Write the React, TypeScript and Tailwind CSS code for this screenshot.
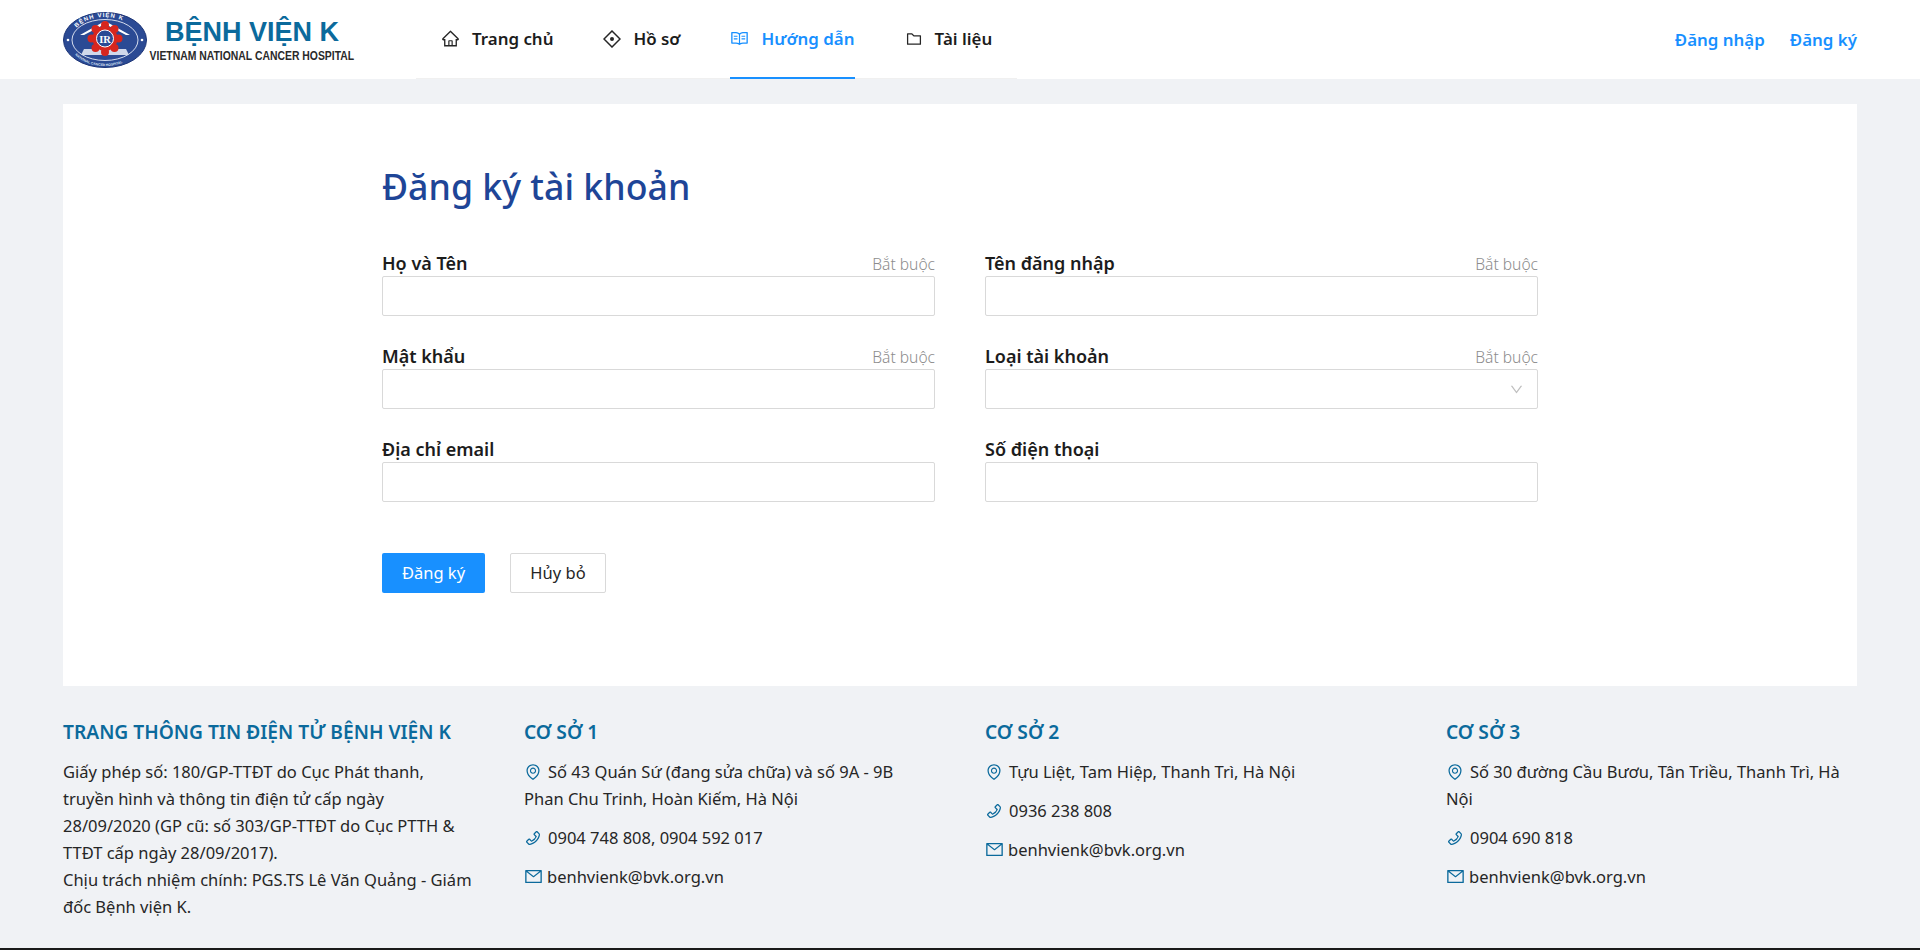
import React from "react";
import { AiOutlineHome, AiOutlineRead, AiOutlineFolder, AiOutlineEnvironment, AiOutlinePhone, AiOutlineMail, AiOutlineDown } from "react-icons/ai";

function Logo() {
  return (
    <div className="flex items-center shrink-0 w-[300px] h-[79px]">
      <svg width="84" height="58" viewBox="0 0 84 58" className="shrink-0">
        <defs>
          <path id="arcTop" d="M8 30 A34 24 0 0 1 76 30" />
          <path id="arcBot" d="M6 30 A36 25 0 0 0 78 30" />
        </defs>
        <ellipse cx="42" cy="29" rx="41.5" ry="27.5" fill="#2b4a94" stroke="#1d3577" />
        <ellipse cx="42" cy="29" rx="33" ry="20.5" fill="#2b4a94" stroke="#e8ecf6" strokeWidth="0.9" />
        <text fontSize="6" fontWeight="700" fill="#fff" fontFamily="Liberation Sans, sans-serif" letterSpacing="1"><textPath href="#arcTop" startOffset="16%">BỆNH VIỆN K</textPath></text>
        <text fontSize="3.4" fontWeight="700" fill="#dfe5f3" fontFamily="Liberation Sans, sans-serif"><textPath href="#arcBot" startOffset="16%">NATIONAL CANCER HOSPITAL</textPath></text>
        <path d="M17 24 L42 10 L67 24 L63 24 L42 13 L21 24Z" fill="#fff" />
        <path d="M21 38 H63 L66 44 H18Z" fill="#cfd7ea" />
        <g fill="#d7261e">
          <circle cx="42" cy="14" r="4" /><circle cx="42" cy="41" r="4" />
          <circle cx="28.5" cy="27.5" r="4" /><circle cx="55.5" cy="27.5" r="4" />
          <circle cx="32.5" cy="18" r="4" /><circle cx="51.5" cy="18" r="4" />
          <circle cx="32.5" cy="37" r="4" /><circle cx="51.5" cy="37" r="4" />
          <circle cx="42" cy="27.5" r="12.5" />
        </g>
        <circle cx="42" cy="27.5" r="8.5" fill="#2b4a94" stroke="#fff" />
        <text x="42" y="31.5" textAnchor="middle" fontSize="10.5" fontWeight="700" fill="#fff" fontFamily="Liberation Serif, serif">IR</text>
        <circle cx="5" cy="29" r="1.3" fill="#fff" /><circle cx="79" cy="29" r="1.3" fill="#fff" />
      </svg>
      <div className="flex flex-col items-center w-[210px] [font-family:'Liberation_Sans',sans-serif]">
        <span className="text-[27px] leading-[30px] font-bold text-[#0b6a9c] mt-[1px] whitespace-nowrap">BỆNH VIỆN K</span>
        <span className="text-[13px] leading-[15px] font-bold text-[#2a2a2a] whitespace-nowrap scale-x-[0.8] mt-[1px]">VIETNAM NATIONAL CANCER HOSPITAL</span>
      </div>
    </div>
  );
}

function DiamondIcon() {
  return (
    <svg width="18" height="18" viewBox="0 0 18 18" className="shrink-0">
      <path d="M9 1 L17 9 L9 17 L1 9Z" fill="none" stroke="#262626" strokeWidth="1.5" />
      <circle cx="9" cy="9" r="2" fill="#262626" />
    </svg>
  );
}

function NavItem({ icon, label, active }: { icon: React.ReactNode; label: string; active?: boolean }) {
  return (
    <div className={`mx-[25px] h-[79px] flex items-center gap-[12px] border-b-2 ${active ? "border-[#1890ff] text-[#1890ff]" : "border-transparent text-[#1c1c1c]"}`}>
      {icon}
      <span className="text-[16.9px] font-semibold whitespace-nowrap">{label}</span>
    </div>
  );
}

function Field({ label, required, select }: { label: string; required?: boolean; select?: boolean }) {
  return (
    <div className="w-[553px] h-[93px]">
      <div className="flex justify-between items-end h-[26px] pb-[1px]">
        <span className="text-[18px] leading-[24px] font-semibold text-[#1c1c1c]">{label}</span>
        {required && <span className="text-[15.6px] leading-[22px] font-light text-[#8c8c8c]">Bắt buộc</span>}
      </div>
      <div className="relative h-[40px] bg-white border border-[#d9d9d9] rounded-[2px] flex items-center justify-end pr-[13px]">
        {select && <AiOutlineDown className="text-[#bfbfbf]" size={15} />}
      </div>
    </div>
  );
}

const titleCls = "text-[19.2px] leading-[28px] font-semibold text-[#0b6a9c] mb-[12px] whitespace-nowrap";

function Line({ icon, children }: { icon: React.ReactNode; children: React.ReactNode }) {
  return (
    <p className="mb-[12px]">
      <span className="inline-block align-[-3px] mr-[6px] text-[#0b6a9c]">{icon}</span>
      {children}
    </p>
  );
}

function Branch({ title, address, phone }: { title: string; address: string; phone: string }) {
  return (
    <div className="w-[411px]">
      <h3 className={titleCls}>{title}</h3>
      <Line icon={<AiOutlineEnvironment size={18} />}>{address}</Line>
      <Line icon={<AiOutlinePhone size={18} />}>{phone}</Line>
      <Line icon={<AiOutlineMail size={19} className="-mr-[2px]" />}>benhvienk@bvk.org.vn</Line>
    </div>
  );
}

export default function App() {
  return (
    <div className="w-[1920px] h-[950px] overflow-hidden bg-[#f0f2f5] flex flex-col [font-family:'Noto_Sans',sans-serif]">
      <header className="h-[79px] bg-white flex items-start justify-between px-[63px] shrink-0">
        <div className="flex">
          <Logo />
          <nav className="flex ml-[53px] border-b border-[#f0f0f0] h-[79px]">
            <NavItem icon={<AiOutlineHome size={19} className="text-[#262626]" />} label="Trang chủ" />
            <NavItem icon={<DiamondIcon />} label="Hồ sơ" />
            <NavItem icon={<AiOutlineRead size={19} />} label="Hướng dẫn" active />
            <NavItem icon={<AiOutlineFolder size={18} className="text-[#262626]" />} label="Tài liệu" />
          </nav>
        </div>
        <div className="flex items-center gap-[25px] h-[79px] text-[16.9px] font-semibold text-[#1890ff]">
          <span>Đăng nhập</span>
          <span>Đăng ký</span>
        </div>
      </header>

      <main className="mx-[63px] mt-[25px] h-[582px] bg-white px-[319px] pt-[58px] shrink-0">
        <h1 className="text-[35.7px] leading-[48px] font-medium text-[#1e4597] mb-[40px]">Đăng ký tài khoản</h1>
        <div className="grid grid-cols-[553px_553px] gap-x-[50px]">
          <Field label="Họ và Tên" required />
          <Field label="Tên đăng nhập" required />
          <Field label="Mật khẩu" required />
          <Field label="Loại tài khoản" required select />
          <Field label="Địa chỉ email" />
          <Field label="Số điện thoại" />
        </div>
        <div className="flex gap-[25px] mt-[24px]">
          <button className="w-[103px] h-[40px] rounded-[2px] bg-[#1890ff] text-white text-[16.5px]">Đăng ký</button>
          <button className="w-[96px] h-[40px] rounded-[2px] bg-white border border-[#d9d9d9] text-[#262626] text-[16.5px]">Hủy bỏ</button>
        </div>
      </main>

      <footer className="flex-1 mx-[63px] pt-[32px] grid grid-cols-[411px_411px_411px_411px] gap-x-[50px] text-[16.5px] leading-[27px] text-[#262626]">
        <div className="w-[411px]">
          <h3 className={titleCls}>TRANG THÔNG TIN ĐIỆN TỬ BỆNH VIỆN K</h3>
          <p>Giấy phép số: 180/GP-TTĐT do Cục Phát thanh, truyền hình và thông tin điện tử cấp ngày 28/09/2020 (GP cũ: số 303/GP-TTĐT do Cục PTTH &amp; TTĐT cấp ngày 28/09/2017).</p>
          <p>Chịu trách nhiệm chính: PGS.TS Lê Văn Quảng - Giám đốc Bệnh viện K.</p>
        </div>
        <Branch title="CƠ SỞ 1" address="Số 43 Quán Sứ (đang sửa chữa) và số 9A - 9B Phan Chu Trinh, Hoàn Kiếm, Hà Nội" phone="0904 748 808, 0904 592 017" />
        <Branch title="CƠ SỞ 2" address="Tựu Liệt, Tam Hiệp, Thanh Trì, Hà Nội" phone="0936 238 808" />
        <Branch title="CƠ SỞ 3" address="Số 30 đường Cầu Bươu, Tân Triều, Thanh Trì, Hà Nội" phone="0904 690 818" />
      </footer>
      <div className="h-[2px] bg-[#1a1a1a] shrink-0" />
    </div>
  );
}
